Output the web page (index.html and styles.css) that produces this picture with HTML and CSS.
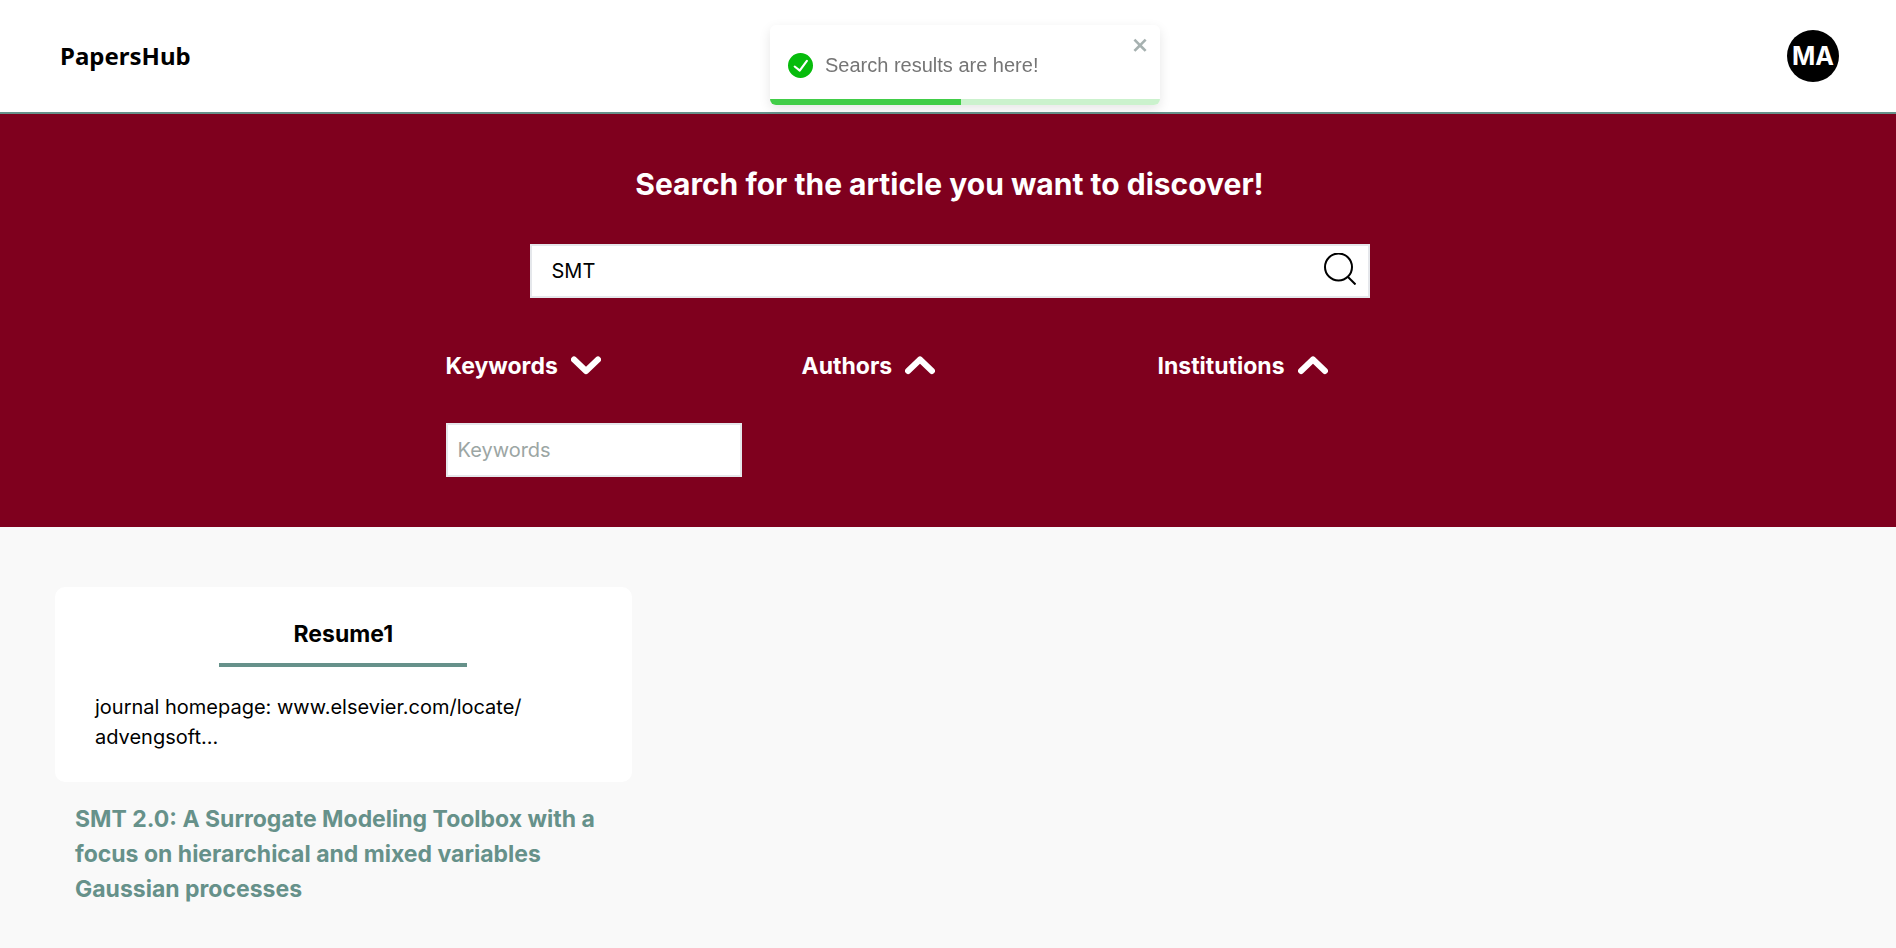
FILE: index.html
```
<!DOCTYPE html>
<html lang="en">
<head>
  <meta charset="UTF-8">
  <meta name="viewport" content="width=device-width, initial-scale=1">
  <title>PapersHub</title>
  <link rel="stylesheet" href="styles.css">
</head>
<body>

  <header class="navbar">
    <a href="#" class="logo">PapersHub</a>
    <button type="button" class="avatar">MA</button>
  </header>

  <main>
    <section class="search">
      <h1>Search for the article you want to discover!</h1>

      <form class="search-box">
        <input type="text" aria-label="Search articles" value="SMT">
        <button type="submit" aria-label="Search">
          <svg viewBox="0 0 32 32" width="32" height="32" fill="none" stroke="currentColor" stroke-width="2">
            <circle cx="14.5" cy="14" r="13.5"/>
            <path d="M24 24l7.5 7.5"/>
          </svg>
        </button>
      </form>

      <div class="filters">
        <div class="filter">
          <button type="button" class="filter-btn" aria-expanded="true">
            Keywords
            <svg viewBox="0 0 30 20" width="30" height="20"><path d="M3 3.5L15 15L27 3.5"/></svg>
          </button>
          <input type="text" aria-label="Keywords" placeholder="Keywords">
        </div>
        <div class="filter">
          <button type="button" class="filter-btn" aria-expanded="false">
            Authors
            <svg viewBox="0 0 30 20" width="30" height="20"><path d="M3 15L15 3.5L27 15"/></svg>
          </button>
        </div>
        <div class="filter">
          <button type="button" class="filter-btn" aria-expanded="false">
            Institutions
            <svg viewBox="0 0 30 20" width="30" height="20"><path d="M3 15L15 3.5L27 15"/></svg>
          </button>
        </div>
      </div>
    </section>

    <section class="results">
      <article class="result">
        <div class="card">
          <h2>Resume1</h2>
          <p>journal homepage: www.elsevier.com/locate/ advengsoft...</p>
        </div>
        <a href="#" class="result-title">SMT 2.0: A Surrogate Modeling Toolbox with a focus on hierarchical and mixed variables Gaussian processes</a>
      </article>
    </section>
  </main>

  <div class="toast" role="alert">
    <svg class="toast-icon" viewBox="0 0 24 24" width="25" height="25">
      <path fill="#07bc0c" d="M12 0a12 12 0 1012 12A12.014 12.014 0 0012 0zm6.927 8.2l-6.845 9.289a1.011 1.011 0 01-1.43.188l-4.888-3.908a1 1 0 111.25-1.562l4.076 3.261 6.227-8.451a1 1 0 111.61 1.183z"/>
    </svg>
    <span>Search results are here!</span>
    <button type="button" class="toast-close" aria-label="Close">
      <svg viewBox="0 0 14 16" width="18" height="20"><path fill="currentColor" fill-rule="evenodd" d="M7.71 8.23l3.75 3.75-1.48 1.48-3.75-3.75-3.75 3.75L1 11.98l3.75-3.75L1 4.48 2.48 3l3.75 3.75L9.98 3l1.48 1.48-3.75 3.75z"/></svg>
    </button>
    <div class="toast-progress"></div>
  </div>

</body>
</html>
```
FILE: styles.css
```
:root {
  --primary: #7f001e;
  --accent: #66918a;
  --bg: #f9f9f9;
  --border: #e5e7eb;
}
* { margin: 0; padding: 0; box-sizing: border-box; }
body {
  min-height: 100vh;
  background: var(--bg);
  color: #000;
  font-family: Inter, "Liberation Sans", sans-serif;
  font-size: 20px;
  line-height: 30px;
}
a { color: inherit; text-decoration: none; }
button { background: none; border: none; color: inherit; font: inherit; cursor: pointer; }
input {
  width: 100%;
  height: 54px;
  border: 2px solid var(--border);
  background: #fff;
  font: inherit;
  color: #000;
}
input::placeholder { color: #9ca6a4; opacity: 1; }
svg { display: block; }

/* Navbar */
.navbar {
  display: flex; justify-content: space-between; align-items: center;
  padding: 30px 57px 30px 60px;
  background: #fff;
  border-bottom: 2px solid var(--accent);
}
.logo { font-family: "Noto Sans", sans-serif; font-size: 24px; font-weight: 700; }
.avatar {
  width: 52px; height: 52px;
  border-radius: 50%;
  background: #000; color: #fff;
  font-size: 25px; font-weight: 700;
}

/* Search */
.search {
  display: flex; flex-direction: column; align-items: center;
  padding: 50px 20px 50px 23px;
  background: var(--primary); color: #fff;
}
h1 { font-size: 30px; line-height: 40px; font-weight: 700; margin-bottom: 40px; }
.search-box { position: relative; width: 100%; max-width: 840px; margin-bottom: 50px; }
.search-box input { padding: 0 60px 0 20px; }
.search-box button { position: absolute; right: 14px; top: 9px; color: #000; }

.filters {
  display: grid; grid-template-columns: repeat(3, 1fr); gap: 60px;
  width: 100%; max-width: 1008px;
}
.filter-btn {
  display: flex; align-items: center; gap: 13px;
  height: 35px;
  font-size: 23px; font-weight: 700;
}
.filter-btn path {
  fill: none; stroke: #fff; stroke-width: 6;
  stroke-linecap: round; stroke-linejoin: round;
}
.filter input { margin-top: 40px; padding: 0 10px; }

/* Results */
.results {
  display: grid; grid-template-columns: repeat(3, 1fr); gap: 28px;
  padding: 60px 55px;
}
.card { padding: 30px 40px; border-radius: 10px; background: #fff; }
.card h2 {
  width: 50%;
  margin: 0 auto 25px;
  padding-bottom: 11px;
  border-bottom: 4px solid var(--accent);
  font-size: 23px; line-height: 35px;
  text-align: center;
}
.result-title {
  display: block;
  padding: 20px;
  color: var(--accent);
  font-size: 23px; line-height: 35px; font-weight: 700;
}

/* Toast */
.toast {
  position: fixed; top: 25px; left: 50%;
  display: flex; align-items: center; gap: 12px;
  width: 390px; height: 80px;
  margin-left: -178px;
  padding: 0 18px;
  border-radius: 6px;
  background: #fff; color: #757575;
  box-shadow: 0 4px 12px rgba(0, 0, 0, 0.1);
  font-family: "Liberation Sans", sans-serif;
  overflow: hidden;
}
.toast-close { position: absolute; top: 10px; right: 10px; color: #a6b1b0; }
.toast-progress {
  position: absolute; left: 0; right: 0; bottom: 0;
  height: 6px;
  background: linear-gradient(to right, #41cd48 49%, #cbf2cd 49%);
}
```
